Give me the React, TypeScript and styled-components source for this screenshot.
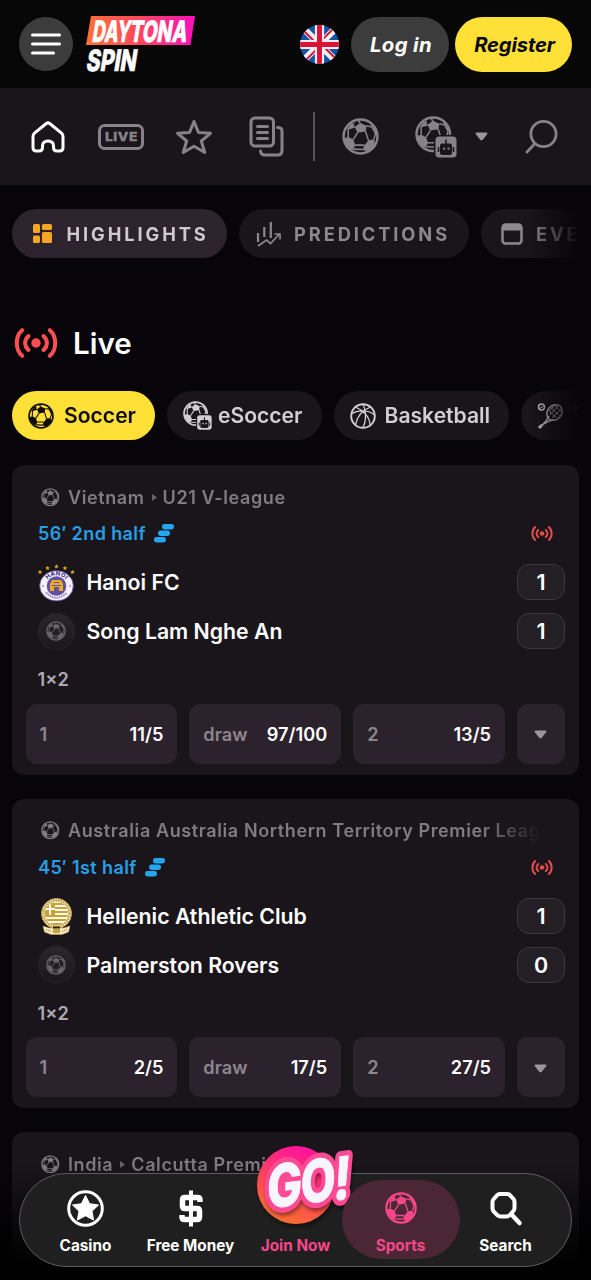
import React from 'react';
import styled, { createGlobalStyle } from 'styled-components';

const Global = createGlobalStyle`
  * { box-sizing: border-box; }
  html, body { margin: 0; background: #070509; }
  body { font-family: Inter, "Liberation Sans", sans-serif; color: #fff; overflow: hidden; }
  svg { display: block; flex: none; overflow: visible; }
`;

const Page = styled.div`
  position: relative;
  width: 591px;
  height: 1280px;
  overflow: hidden;
  background: #070509;
`;

const Header = styled.header`
  height: 88px;
  padding: 0 19px;
  display: flex;
  align-items: center;
  background: #080708;
`;

const MenuButton = styled.div`
  width: 54px;
  height: 54px;
  border-radius: 50%;
  background: #3d3c3d;
  display: grid;
  place-items: center;
  margin-right: 13px;
`;

const Flag = styled.div`
  margin-left: auto;
  margin-right: 12px;
`;

const HeaderButton = styled.div<{ $bg: string; $color: string; $width: number; $spacing: number }>`
  width: ${(p) => p.$width}px;
  height: 55px;
  border-radius: 28px;
  background: ${(p) => p.$bg};
  color: ${(p) => p.$color};
  display: grid;
  place-items: center;
  padding-left: 2px;
  font-size: 20.3px;
  font-weight: 700;
  font-style: italic;
  letter-spacing: ${(p) => p.$spacing}px;
  & + & { margin-left: 6px; }
`;

const IconBar = styled.nav`
  height: 97px;
  background: #1a151b;
  color: #87828a;
  display: flex;
  align-items: center;
  padding: 0 32px 0 30px;
`;

const IconSlot = styled.div<{ $width: number; $gap?: number }>`
  width: ${(p) => p.$width}px;
  margin-left: ${(p) => p.$gap || 0}px;
  flex: none;
`;

const Separator = styled.div`
  width: 2px;
  height: 49px;
  margin-left: 29px;
  background: #57525a;
`;

const PillRow = styled.div<{ $top: number }>`
  display: flex;
  gap: 12px;
  margin: ${(p) => p.$top}px 12px 0;
  overflow: hidden;
  mask-image: linear-gradient(90deg, #000 515px, transparent 568px);
`;

const TabPill = styled.div<{ $active?: boolean; $width: number; $left: number; $gap: number; $spacing: number }>`
  flex: none;
  width: ${(p) => p.$width}px;
  height: 49px;
  border-radius: 25px;
  padding-left: ${(p) => p.$left}px;
  display: flex;
  align-items: center;
  gap: ${(p) => p.$gap}px;
  white-space: nowrap;
  background: ${(p) => (p.$active ? '#2c232e' : '#1a151b')};
  color: ${(p) => (p.$active ? '#cfc9d1' : '#8d888f')};
  font-size: 18.300px;
  font-weight: 700;
  letter-spacing: ${(p) => p.$spacing}px;
`;

const SportPill = styled(TabPill)`
  background: ${(p) => (p.$active ? '#ffe037' : '#1a151b')};
  color: ${(p) => (p.$active ? '#100d0d' : '#d3ced5')};
  font-size: 21.1px;
  font-weight: 600;
`;

const Heading = styled.h1`
  display: flex;
  align-items: center;
  gap: 15px;
  height: 50px;
  margin: 60px 0 0 14px;
  font-size: 29.5px;
  font-weight: 600;
`;

const Cards = styled.main`
  display: flex;
  flex-direction: column;
  gap: 24px;
  margin: 25px 12px 0;
`;

const Card = styled.section`
  height: 309.7px;
  flex: none;
  border-radius: 12px;
  background: #1a151b;
  padding: 17px 14px 0 13.500px;
`;

const League = styled.div`
  height: 30px;
  margin: 0 23px 0 15px;
  display: flex;
  align-items: center;
  gap: 9px;
  color: #817c84;
  font-size: 18px;
  font-weight: 600;
  letter-spacing: 0.6px;
  white-space: nowrap;
  overflow: hidden;
  mask-image: linear-gradient(90deg, #000 440px, transparent 500px);
`;

const LeagueArrow = styled.svg`
  margin: 0 -3px 0 -2px;
`;

const Status = styled.div`
  height: 46px;
  padding: 0 12.500px 3px;
  display: flex;
  align-items: center;
  gap: 8px;
  color: #279fe6;
  font-size: 18px;
  font-weight: 600;
  letter-spacing: 0.4px;
  & > :last-child { margin-left: auto; }
`;

const Team = styled.div`
  height: 48.7px;
  display: flex;
  align-items: center;
  padding-left: 12px;
  font-size: 21.25px;
  font-weight: 600;
`;

const Crest = styled.div<{ $plain?: boolean }>`
  width: 37px;
  height: 37px;
  margin-right: 12px;
  border-radius: 50%;
  display: grid;
  place-items: center;
  color: #68636a;
  background: ${(p) => (p.$plain ? 'linear-gradient(#2c272d, #1b161c)' : 'none')};
  box-shadow: ${(p) => (p.$plain ? 'inset 0 0 0 1px #29242a' : 'none')};
`;

const Score = styled.div`
  width: 48px;
  height: 36px;
  margin-left: auto;
  border: 1.5px solid #3c373d;
  border-radius: 12px;
  background: #231f24;
  display: grid;
  place-items: center;
  font-size: 21.5px;
  font-weight: 600;
`;

const Market = styled.div`
  height: 47.500px;
  padding-left: 12px;
  display: flex;
  align-items: center;
  color: #aea9b0;
  font-size: 18.200px;
  font-weight: 600;
`;

const Odds = styled.div`
  display: grid;
  grid-template-columns: 1fr 1fr 1fr 48px;
  gap: 12px;
  margin-top: 0.9px;
`;

const Odd = styled.div<{ $center?: boolean }>`
  height: 60px;
  border-radius: 11px;
  background: #2c222d;
  padding: ${(p) => (p.$center ? '2px 0 0' : '0 14px')};
  display: flex;
  align-items: center;
  justify-content: ${(p) => (p.$center ? 'center' : 'space-between')};
  color: #8d868f;
  font-size: 18.2px;
  font-weight: 600;
  b { color: #fff; font-weight: 600; font-size: 18.2px; }
`;

const BottomFade = styled.div`
  position: absolute;
  inset: auto 0 0 0;
  height: 118px;
  background: linear-gradient(transparent, #000 86%);
`;

const BottomBar = styled.nav`
  position: absolute;
  left: 19px;
  bottom: 13px;
  width: 553px;
  height: 94px;
  padding: 6px 13px;
  border: 1.5px solid #5d5b5e;
  border-radius: 47px;
  background: rgba(32, 32, 32, 0.97);
  display: flex;
`;

const BarItem = styled.div<{ $pink?: boolean }>`
  position: relative;
  flex: 1 1 0;
  display: flex;
  flex-direction: column;
  align-items: center;
  color: ${(p) => (p.$pink ? '#f6478b' : '#fff')};
  font-size: 15.3px;
  font-weight: 700;
  white-space: nowrap;
`;

const ActiveShade = styled.div`
  position: absolute;
  left: -6px;
  right: -7px;
  top: 0;
  height: 79px;
  border-radius: 40px;
  background: #4b2735;
`;

const BarIcon = styled.div`
  position: relative;
  height: 56px;
  display: grid;
  place-items: center;
`;

const BarLabel = styled.span`
  position: relative;
  line-height: 19px;
`;

const GoBadge = styled.div`
  position: absolute;
  left: 50%;
  top: -41px;
  margin-left: -47px;
`;

const Ball = ({ size }: { size: number }) => (
  <svg width={size} height={size} viewBox="0 0 24 24" fill="currentColor">
    <circle cx="12" cy="12" r="11" fill="none" stroke="currentColor" strokeWidth="1.6" />
    <path d="M8.3 5.7 11.8 3.2 16 5.1 15.4 8.7 10 9.6Z" />
    <path d="M1.4 13 4.2 12.3 7.3 14 8.7 18 6.6 20.7C3.8 19.2 1.8 16.4 1.4 13Z" />
    <path d="M14.2 18.1 17.2 14.4 20.8 13.8 21.4 16.8C20.3 19 18.4 20.8 16 21.7L13.6 20.6Z" />
    <path d="M18.4 3.2 22.5 9 21.3 10.2 19 6Z" />
    <path d="M5.7 3.8 8 3.3 7.4 6.1 3.4 7.3 2 9Z" />
    <path d="M10.2 9.4 7.2 14M8.5 17.6H14.4M17.2 14.6 15.2 8.6M8.4 5.7 4.1 7 4 12.4M11.8 3.3 10.4 1.5M16 5.1 19 5.8M20.7 14 21.8 9.6M7 20.2 13.8 20.4" fill="none" stroke="currentColor" strokeWidth="1" />
  </svg>
);

const EBall = ({ size, bg }: { size: number; bg: string }) => (
  <svg width={size} height={size} viewBox="0 0 42 42" fill="currentColor">
    <Ball size={36.5} />
    <rect x="19" y="19" width="23" height="23" rx="4" fill={bg} />
    <rect x="20.5" y="20.5" width="21" height="21" rx="3.5" />
    <path d="M31 23.5V28M23.5 31V36M38.5 31V36" stroke={bg} strokeWidth="1.5" />
    <rect x="25" y="27.5" width="12" height="11.5" rx="2" fill={bg} />
    <rect x="28" y="31.6" width="2" height="2" /><rect x="32.5" y="31.6" width="2" height="2" />
  </svg>
);

const Broadcast = ({ width, color }: { width: number; color: string }) => (
  <svg width={width} height={(width * 30) / 44} viewBox="0 0 44 30" fill="none" stroke={color} strokeWidth="4" strokeLinecap="round">
    <circle cx="22" cy="15" r="4.7" fill={color} stroke="none" />
    <path d="M8.2 2.2C1 8 1 22 8.2 27.8M35.8 2.2C43 8 43 22 35.8 27.8M14.5 8C10 12 10 18 14.5 22M29.5 8C34 12 34 18 29.5 22" />
  </svg>
);

const Caret = () => (
  <svg width="13" height="9" viewBox="0 0 13 9"><path d="M1.5.5H11.5Q13 .5 12.3 2L7.8 7.7Q6.5 9 5.2 7.7L.7 2Q0 .5 1.5.5Z" fill="#9b959d" /></svg>
);

const Bars = () => (
  <svg width="20" height="19" viewBox="0 0 20 19" fill="#25a6f0">
    <rect x="8" y="0" width="12" height="5.500" rx="2.400" />
    <rect x="4" y="6.500" width="12" height="5.500" rx="2.400" />
    <rect x="0" y="13" width="12" height="5.500" rx="2.400" />
  </svg>
);

const Logo = () => (
  <svg width="112" height="60" viewBox="0 0 112 60">
    <defs>
      <linearGradient id="logo" x1="0" x2="1"><stop offset="0" stopColor="#ff7133" /><stop offset=".5" stopColor="#ff4560" /><stop offset="1" stopColor="#ff10bd" /></linearGradient>
    </defs>
    <path d="M5 2H109L104.500 31H0Z" fill="url(#logo)" />
    <g fill="#fff" stroke="#fff" strokeWidth=".7" fontFamily="Inter, sans-serif" fontWeight="800" fontSize="29.500">
      <text transform="translate(5.500 27.500) skewX(-9)" textLength="38" lengthAdjust="spacingAndGlyphs">DAY</text>
      <text transform="translate(43 27.500) skewX(-9)" textLength="57" lengthAdjust="spacingAndGlyphs">TONA</text>
      <text transform="translate(-.5 56.500) skewX(-9)" textLength="50" lengthAdjust="spacingAndGlyphs">SPIN</text>
    </g>
  </svg>
);

const UnionJack = () => (
  <svg width="39" height="39" viewBox="0 0 38 38">
    <clipPath id="round"><circle cx="19" cy="19" r="19" /></clipPath>
    <g clipPath="url(#round)">
      <path fill="#1554a5" d="M0 0H38V38H0Z" />
      <path d="M2 2 36 36M36 2 2 36" stroke="#f3eef3" strokeWidth="6.500" />
      <path d="M4 6 17 19M34 32 21 19M32 4 19 17M6 34 19 21" stroke="#dc1236" strokeWidth="2" />
      <path d="M19 0V38M0 19H38" stroke="#f3eef3" strokeWidth="9" />
      <path d="M19 0V38M0 19H38" stroke="#dc1236" strokeWidth="4.800" />
    </g>
  </svg>
);

const HanoiCrest = () => (
  <svg width="37" height="37" viewBox="0 0 37 37">
    {[[2, 8], [9.500, 4], [18.500, 2.400], [27, 4], [34.500, 8]].map(([x, y]) => (
      <path key={x} transform={`translate(${x} ${y})`} d="M0-2.300.7-.7 2.300-.6 1.100.5 1.500 2.100 0 1.200-1.500 2.100-1.100.5-2.300-.6-.7-.7Z" fill="#e3a719" />
    ))}
    <ellipse cx="18.500" cy="21.800" rx="16.800" ry="15" fill="#f5f2fb" stroke="#6957ad" strokeWidth=".8" />
    <circle cx="18.500" cy="22" r="9.800" fill="#65509f" />
    <path d="M12 27V20L14 16H23L25 20V27H21V23H16V27Z" fill="#e8ad22" />
    <path d="M16 18.500H21M14 21.500H23" stroke="#65509f" strokeWidth="1" />
    <path id="hanoi-top" d="M7.600 20A11.200 11.200 0 0 1 29.400 20" fill="none" />
    <text fill="#4c3d8d" fontSize="6" fontWeight="800" fontFamily="Inter, sans-serif"><textPath href="#hanoi-top" startOffset="50%" textAnchor="middle">HANOI</textPath></text>
    <path d="M8 28.500Q18.500 39 29 28.500" fill="none" stroke="#8d7fbe" strokeWidth="2" strokeDasharray="1.500 .9" />
    <circle cx="5" cy="22" r=".8" fill="#65509f" /><circle cx="32" cy="22" r=".8" fill="#65509f" />
  </svg>
);

const HellenicCrest = () => (
  <svg width="37" height="37" viewBox="0 0 37 37">
    <circle cx="18.500" cy="15.500" r="15" fill="#f3e7bd" stroke="#c5a44b" strokeWidth="1" />
    <circle cx="18.500" cy="15.500" r="13" fill="none" stroke="#bd9b45" strokeWidth="2.200" strokeDasharray="1.500 1" />
    <clipPath id="inner"><circle cx="18.500" cy="15.500" r="11.500" /></clipPath>
    <g clipPath="url(#inner)">
      <path fill="#fffbea" d="M6 3H31V28H6Z" />
      <path d="M6 6H31M6 10H31M6 14H31M6 18H31M6 22H31M6 26H31" stroke="#c9a136" strokeWidth="2" />
      <path fill="#c9a136" d="M6 5H17V17H6Z" /><path d="M12 5V17M6 11H17" stroke="#fffbea" strokeWidth="2" />
    </g>
    <path d="M5 28 11 30H26L32 28 30.500 34 24 36.500H13L6.500 34Z" fill="#f7efcb" stroke="#c0a14c" strokeWidth=".6" />
    <path d="M8 31.500 13 33.500M24 33.500 29 31.500" stroke="#c0a14c" strokeWidth="1.500" strokeDasharray="1.300 .8" />
    <path d="M15 28.500H22V30.500H15Z" fill="#30250d" /><path d="M15 31H22V35H15Z" fill="#c9a136" />
  </svg>
);

const Go = () => (
  <svg width="104" height="90" viewBox="0 0 104 90">
    <defs>
      <linearGradient id="go" x1=".7" y1="0" x2=".3" y2="1"><stop offset=".1" stopColor="#ff1797" /><stop offset=".6" stopColor="#ff4a54" /><stop offset="1" stopColor="#ff7130" /></linearGradient>
      <filter id="shadow" x="-20%" y="-20%" width="150%" height="150%"><feDropShadow dx="1" dy="3" stdDeviation="2" floodColor="#000" floodOpacity=".45" /></filter>
    </defs>
    <circle cx="47" cy="46" r="39" fill="url(#go)" filter="url(#shadow)" />
    <g fontFamily="Inter, sans-serif" fontWeight="800" fontSize="59" fill="#f8f6fc" strokeLinejoin="round" filter="url(#shadow)">
      {[0, 1].map((layer) => (
        <g key={layer} stroke={layer ? '#f8f6fc' : '#ff4b96'} strokeWidth={layer ? 0.8 : 11}>
          <text transform="translate(17.500 69.500) skewY(-7) skewX(-2)" textLength="35" lengthAdjust="spacingAndGlyphs">G</text>
          <text transform="translate(51 65) skewY(-7) skewX(-2)" textLength="35" lengthAdjust="spacingAndGlyphs">O</text>
          <text transform="translate(83.500 61.500) skewY(-7) skewX(-4)" textLength="17" lengthAdjust="spacingAndGlyphs">!</text>
        </g>
      ))}
    </g>
  </svg>
);

type TeamInfo = { name: string; score: number; crest?: React.ReactNode };
type MatchInfo = { league: string[]; status?: string; teams: TeamInfo[]; odds: string[] };

const matches: MatchInfo[] = [
  { league: ['Vietnam', 'U21 V-league'], status: '56′ 2nd half', teams: [{ name: 'Hanoi FC', score: 1, crest: <HanoiCrest /> }, { name: 'Song Lam Nghe An', score: 1 }], odds: ['11/5', '97/100', '13/5'] },
  { league: ['Australia Australia Northern Territory Premier League'], status: '45′ 1st half', teams: [{ name: 'Hellenic Athletic Club', score: 1, crest: <HellenicCrest /> }, { name: 'Palmerston Rovers', score: 0 }], odds: ['2/5', '17/5', '27/5'] },
  { league: ['India', 'Calcutta Premier'], teams: [], odds: [] },
];

const Match = ({ match }: { match: MatchInfo }) => (
  <Card>
    <League>
      <Ball size={18.5} />
      <span>{match.league[0]}</span>
      {match.league[1] && (
        <>
          <LeagueArrow width="5" height="7" viewBox="0 0 5 7"><path d="M0 0 5 3.500 0 7Z" fill="#68636b" /></LeagueArrow>
          <span>{match.league[1]}</span>
        </>
      )}
    </League>
    {match.status && (
      <>
        <Status>
          <span>{match.status}</span>
          <Bars />
          <Broadcast width={22} color="#e44b4b" />
        </Status>
        {match.teams.map((team) => (
          <Team key={team.name}>
            <Crest $plain={!team.crest}>{team.crest || <Ball size={20} />}</Crest>
            {team.name}
            <Score>{team.score}</Score>
          </Team>
        ))}
        <Market>1×2</Market>
        <Odds>
          {['1', 'draw', '2'].map((label, i) => (
            <Odd key={label}>{label}<b>{match.odds[i]}</b></Odd>
          ))}
          <Odd $center><Caret /></Odd>
        </Odds>
      </>
    )}
  </Card>
);

export default function App() {
  return (
    <Page>
      <Global />
      <Header>
        <MenuButton>
          <svg width="32" height="24" viewBox="0 0 32 24" stroke="#fff" strokeWidth="3" strokeLinecap="round"><path d="M2.500 3H29.500M2.500 12H29.500M2.500 21H23.500" /></svg>
        </MenuButton>
        <Logo />
        <Flag><UnionJack /></Flag>
        <HeaderButton $bg="#3d3c3d" $color="#fff" $width={98} $spacing={0.4}>Log in</HeaderButton>
        <HeaderButton $bg="#ffe037" $color="#090807" $width={117} $spacing={-0.2}>Register</HeaderButton>
      </Header>
      <IconBar>
        <IconSlot $width={36}>
          <svg width="36" height="32" viewBox="0 0 36 32" fill="none" stroke="#fff" strokeWidth="3" strokeLinejoin="round"><path d="M16.300 2.500Q18 1.200 19.700 2.500L31.500 12.200Q33 13.500 33 15.500V26.500Q33 30 29.500 30H27Q23.500 30 23.500 26.500V25Q23.500 20 18 20T12.500 25V26.500Q12.500 30 9 30H6.500Q3 30 3 26.500V15.500Q3 13.500 4.500 12.200Z" /></svg>
        </IconSlot>
        <IconSlot $width={46} $gap={32}>
          <svg width="46" height="26" viewBox="0 0 46 26"><rect x="1.500" y="1.500" width="43" height="23" rx="5" fill="none" stroke="currentColor" strokeWidth="3" /><text x="7" y="17.200" fontSize="12" fontWeight="800" fontFamily="Inter, sans-serif" fill="currentColor" stroke="currentColor" strokeWidth=".3" letterSpacing=".5" textLength="33" lengthAdjust="spacingAndGlyphs">LIVE</text></svg>
        </IconSlot>
        <IconSlot $width={38} $gap={31}>
          <svg width="38" height="36" viewBox="0 0 38 36" fill="none" stroke="currentColor" strokeWidth="3" strokeLinejoin="round"><path d="M19 2.500 23.500 13.500 35.500 14.300 26.300 22 29.800 33.500 19 27.200 8.200 33.500 11.700 22 2.500 14.300 14.500 13.500Z" /></svg>
        </IconSlot>
        <IconSlot $width={35} $gap={36}>
          <svg width="35" height="41" viewBox="0 0 35 41" fill="none" stroke="currentColor" strokeWidth="3" strokeLinecap="round"><rect x="2" y="2" width="22.500" height="28" rx="4" /><path d="M8.500 10.500H18.500M8.500 16.500H18.500M8.500 22.500H18.500M28.500 11.500Q33 11.500 33 15V34.500Q33 39 28.500 39H16Q12 39 11.500 35" /></svg>
        </IconSlot>
        <Separator />
        <IconSlot $width={38} $gap={27}><Ball size={37} /></IconSlot>
        <IconSlot $width={42} $gap={35}><EBall size={42} bg="#1a151b" /></IconSlot>
        <IconSlot $width={13} $gap={18.5}><Caret /></IconSlot>
        <IconSlot $width={34} $gap={37}>
          <svg width="34" height="36" viewBox="0 0 34 36" fill="none" stroke="currentColor" strokeWidth="2.800" strokeLinecap="round"><circle cx="18.500" cy="15" r="12.600" /><path d="M10 24.500 2 33" /></svg>
        </IconSlot>
      </IconBar>

      <PillRow $top={24}>
        <TabPill $active $width={215} $left={21} $gap={14.5} $spacing={2.9}>
          <svg width="19" height="19" viewBox="0 0 19 19" fill="#f6a623"><rect width="7" height="9" rx="1.500" /><rect x="9" width="10" height="6" rx="1.500" /><rect y="11.500" width="7" height="7.500" rx="1.500" /><rect x="9" y="8" width="10" height="11" rx="1.500" /></svg>
          HIGHLIGHTS
        </TabPill>
        <TabPill $width={230} $left={17} $gap={12} $spacing={2.9}>
          <svg width="26" height="26" viewBox="0 0 26 26" fill="none" stroke="currentColor" strokeWidth="2.200"><path d="M2 12V21M8.300 6V16M14.800 1V17" /><path d="M2 25 10.500 19 14.500 22.500 23 13.500M18.500 13H24V18.500" strokeWidth="1.700" /></svg>
          PREDICTIONS
        </TabPill>
        <TabPill $width={140} $left={20} $gap={13} $spacing={2.9}>
          <svg width="22" height="22" viewBox="0 0 22 22"><rect x="1.500" y="1.500" width="19" height="19" rx="3" fill="none" stroke="currentColor" strokeWidth="2.500" /><path fill="currentColor" d="M2 2H20V7.500H2Z" /></svg>
          EVENTS
        </TabPill>
      </PillRow>

      <Heading><Broadcast width={44} color="#ff4f52" />Live</Heading>

      <PillRow $top={23}>
        <SportPill $active $width={143} $left={16} $gap={10} $spacing={0}><Ball size={26} />Soccer</SportPill>
        <SportPill $width={154.500} $left={16} $gap={6} $spacing={0}><EBall size={29} bg="#1a151b" />eSoccer</SportPill>
        <SportPill $width={175} $left={16} $gap={9} $spacing={0}>
          <svg width="26" height="26" viewBox="0 0 26 26" fill="none" stroke="currentColor" strokeWidth="1.300"><circle cx="13" cy="13" r="11.800" strokeWidth="1.900" /><path d="M12.500 1C16 6 17 18 12.500 25M20.500 4C13 7 7 13 5.500 22M5.500 4C13 7 20 14 20 22.500M1.500 11C8 6.500 19 7 24.500 12" /></svg>
          Basketball
        </SportPill>
        <SportPill $width={140} $left={16} $gap={11} $spacing={0}>
          <svg width="26" height="26" viewBox="0 0 26 26" fill="none" stroke="currentColor" strokeWidth="1.500"><circle cx="4.500" cy="4" r="3" /><path d="M2.500 5.500 6.500 3" strokeWidth="1" /><ellipse cx="17.500" cy="9.500" rx="7" ry="8.500" transform="rotate(42 17.500 9.500)" /><path d="M12 13Q10 18 3 24M17 17Q11 17 3 24" /><path d="M12.500 8 19.500 15M14.500 5 22.500 12.500M17.500 2.500 24.500 9M15 15 24.500 5.500M12.500 12 21.500 2.500M12 8 17 3" strokeWidth=".9" /><path d="M2 25 5 22" strokeWidth="3" /></svg>
          Tennis
        </SportPill>
      </PillRow>

      <Cards>{matches.map((m) => <Match key={m.league[0]} match={m} />)}</Cards>

      <BottomFade />
      <BottomBar>
        <BarItem>
          <BarIcon><svg width="37" height="37" viewBox="0 0 37 37"><circle cx="18.500" cy="18.500" r="16.800" fill="none" stroke="#fff" strokeWidth="3" /><path d="M18.500 5.500 22.600 13.700 31.500 15 25 21.200 26.600 30 18.500 25.800 10.400 30 12 21.200 5.500 15 14.400 13.700Z" fill="#fff" stroke="#fff" strokeLinejoin="round" /></svg></BarIcon>
          <BarLabel>Casino</BarLabel>
        </BarItem>
        <BarItem>
          <BarIcon><svg width="26" height="37" viewBox="0 0 26 37" fill="none" stroke="#fff"><path d="M22 12V10Q22 7.500 19.500 7.500H7Q4.500 7.500 4.500 10V16Q4.500 18.500 7 18.500H19Q21.500 18.500 21.500 21V27Q21.500 29.500 19 29.500H6.500Q4 29.500 4 27V25" strokeWidth="5.500" /><path d="M13 .5V36.500" strokeWidth="4" /></svg></BarIcon>
          <BarLabel>Free Money</BarLabel>
        </BarItem>
        <BarItem $pink>
          <GoBadge><Go /></GoBadge>
          <BarIcon />
          <BarLabel>Join Now</BarLabel>
        </BarItem>
        <BarItem $pink>
          <ActiveShade />
          <BarIcon><Ball size={32} /></BarIcon>
          <BarLabel>Sports</BarLabel>
        </BarItem>
        <BarItem>
          <BarIcon><svg width="34" height="35" viewBox="0 0 34 35" fill="none" stroke="#fff" strokeLinecap="round"><path d="M10.500 3H18Q20 3 21.200 4.300L24.500 8Q25.500 9.300 25.500 11V17Q25.500 18.800 24.300 20.200L20.800 24Q19.500 25.500 17.500 25.500H11.500Q9.800 25.500 8.500 24.300L4.600 20.300Q3.500 19 3.500 17.300V11Q3.500 9.300 4.700 8L8.200 4.200Q9.300 3 10.500 3Z" strokeWidth="4" strokeLinejoin="round" /><path d="M23 24 30.500 32" strokeWidth="4.500" /></svg></BarIcon>
          <BarLabel>Search</BarLabel>
        </BarItem>
      </BottomBar>
    </Page>
  );
}
